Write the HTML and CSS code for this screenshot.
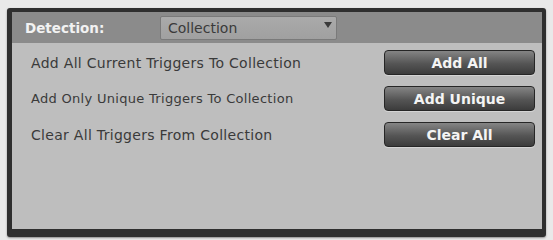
FILE: index.html
```html
<!DOCTYPE html>
<html lang="en">
<head>
    <meta charset="UTF-8">
    <title>Detection</title>
    <link rel="stylesheet" href="styles.css">
</head>
<body>
    <div class="panel">
        <div class="panel-head">
            <span class="head-label">Detection:</span>
            <div class="select">
                <span>Collection</span>
                <span class="arrow"></span>
            </div>
        </div>
        <div class="panel-body">
            <div class="row">
                <span class="row-text">Add All Current Triggers To Collection</span>
                <button class="btn">Add All</button>
            </div>
            <div class="row">
                <span class="row-text small">Add Only Unique Triggers To Collection</span>
                <button class="btn">Add Unique</button>
            </div>
            <div class="row">
                <span class="row-text">Clear All Triggers From Collection</span>
                <button class="btn">Clear All</button>
            </div>
        </div>
    </div>
</body>
</html>
```
FILE: styles.css
```css
body {
    margin: 0;
    background-color: #e9e9e9;
    font-family: "DejaVu Sans", "Liberation Sans", sans-serif;
}

.panel {
    margin: 8px 7px 3px 7px;
    height: 217px;
    border-style: solid;
    border-color: #2f2f2f;
    border-width: 4px 4px 8px 5px;
    border-radius: 3px;
    background-color: #bebebe;
    box-shadow: 0 1px 2px rgba(0, 0, 0, 0.4);
    display: flex;
    flex-direction: column;
}

.panel-head {
    height: 31px;
    background-color: #8b8b8b;
    display: flex;
    align-items: center;
    padding-left: 13px;
}

.head-label {
    width: 135px;
    color: #f2f2f2;
    font-weight: bold;
    font-size: 13.5px;
}

.select {
    width: 164px;
    height: 22px;
    padding: 0 4px 0 7px;
    background: linear-gradient(#aaaaaa, #a0a0a0);
    border: 1px solid #7a7a7a;
    border-radius: 2px;
    display: flex;
    align-items: center;
    justify-content: space-between;
    color: #3a3a3a;
    font-size: 14px;
}

.arrow {
    width: 0;
    height: 0;
    border-left: 4px solid transparent;
    border-right: 4px solid transparent;
    border-top: 6px solid #3a3a3a;
    margin-top: -6px;
}

.panel-body {
    padding: 7px 7px 0 19px;
    display: flex;
    flex-direction: column;
    gap: 11px;
}

.row {
    display: flex;
    align-items: center;
    justify-content: space-between;
}

.row-text {
    color: #3a3a3a;
    font-size: 14px;
    letter-spacing: 0.3px;
}

.row-text.small {
    font-size: 13px;
}

.btn {
    width: 151px;
    height: 25px;
    border: 1px solid #262626;
    border-radius: 4px;
    background: linear-gradient(#858585, #555 55%, #3c3c3c);
    color: #f4f4f4;
    font-family: inherit;
    font-weight: bold;
    font-size: 14px;
    box-shadow: 0 1px 0 rgba(255, 255, 255, 0.35);
}
```
